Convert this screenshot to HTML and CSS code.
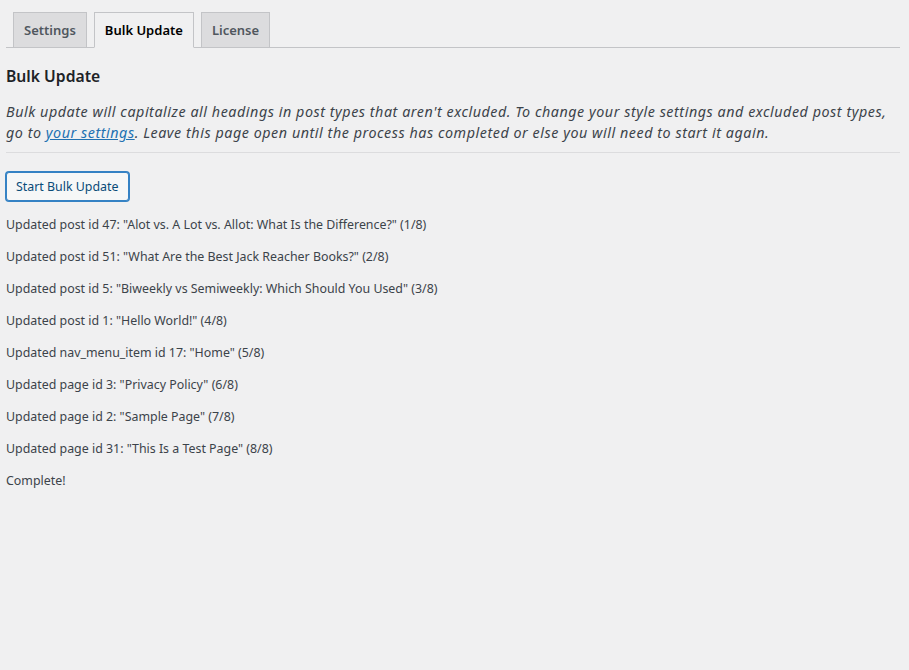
FILE: index.html
```html
<!DOCTYPE html>
<html lang="en">
<head>
<meta charset="utf-8">
<title>Bulk Update</title>
<link rel="stylesheet" href="styles.css">
</head>
<body>
<div class="wrap">
  <nav class="nav-tab-wrapper">
    <a class="nav-tab" href="#">Settings</a>
    <a class="nav-tab nav-tab-active" href="#">Bulk Update</a>
    <a class="nav-tab" href="#">License</a>
  </nav>
  <h2 class="title">Bulk Update</h2>
  <p class="description">Bulk update will capitalize all headings in post types that aren't excluded. To change your style settings and excluded post types, go to <a href="#">your settings</a>. Leave this page open until the process has completed or else you will need to start it again.</p>
  <hr class="sep">
  <button class="button" type="button">Start Bulk Update</button>
  <div class="log">
    <p>Updated post id 47: "Alot vs. A Lot vs. Allot: What Is the Difference?" (1/8)</p>
    <p>Updated post id 51: "What Are the Best Jack Reacher Books?" (2/8)</p>
    <p>Updated post id 5: "Biweekly vs Semiweekly: Which Should You Used" (3/8)</p>
    <p>Updated post id 1: "Hello World!" (4/8)</p>
    <p>Updated nav_menu_item id 17: "Home" (5/8)</p>
    <p>Updated page id 3: "Privacy Policy" (6/8)</p>
    <p>Updated page id 2: "Sample Page" (7/8)</p>
    <p>Updated page id 31: "This Is a Test Page" (8/8)</p>
    <p>Complete!</p>
  </div>
</div>
</body>
</html>
```
FILE: styles.css
```css
html, body {
  margin: 0;
  padding: 0;
  background: #f0f0f1;
}
body {
  font-family: "Noto Sans", "Open Sans", sans-serif;
  font-size: 12.4px;
  line-height: 1.4em;
  color: #3c434a;
}
.wrap {
  padding: 12px 9px 0 6px;
}
.nav-tab-wrapper {
  display: flex;
  border-bottom: 1px solid #c3c4c7;
  padding-left: 7px;
  gap: 7px;
}
.nav-tab {
  display: block;
  margin-bottom: -1px;
  padding: 5px 10px;
  border: 1px solid #c3c4c7;
  background: #dcdcde;
  color: #50575e;
  font-size: 13px;
  line-height: 24px;
  font-weight: 600;
  text-decoration: none;
}
.nav-tab-active {
  background: #f0f0f1;
  border-bottom-color: #f0f0f1;
  color: #000;
}
.title {
  margin: 18px 0 0;
  font-size: 15.7px;
  line-height: 20px;
  font-weight: 600;
  color: #1d2327;
}
.description {
  margin: 15px 0 0;
  font-size: 14.3px;
  line-height: 21px;
  letter-spacing: 0.55px;
  font-style: italic;
  color: #3c434a;
}
.description a {
  color: #2271b1;
}
.sep {
  margin: 9px 0 0;
  border: 0;
  border-top: 1px solid #dcdcde;
  height: 0;
}
.button {
  display: block;
  margin-top: 19px;
  height: 29px;
  padding: 0 9px;
  font-family: inherit;
  font-size: 12.4px;
  color: #0a4b78;
  background: #f6f7f7;
  border: 1px solid #3582c4;
  border-radius: 3px;
  box-shadow: 0 0 0 1px #3582c4;
}
.log p {
  margin: 0;
  height: 32px;
  line-height: 19px;
}
.log {
  margin-top: 14px;
}
```
